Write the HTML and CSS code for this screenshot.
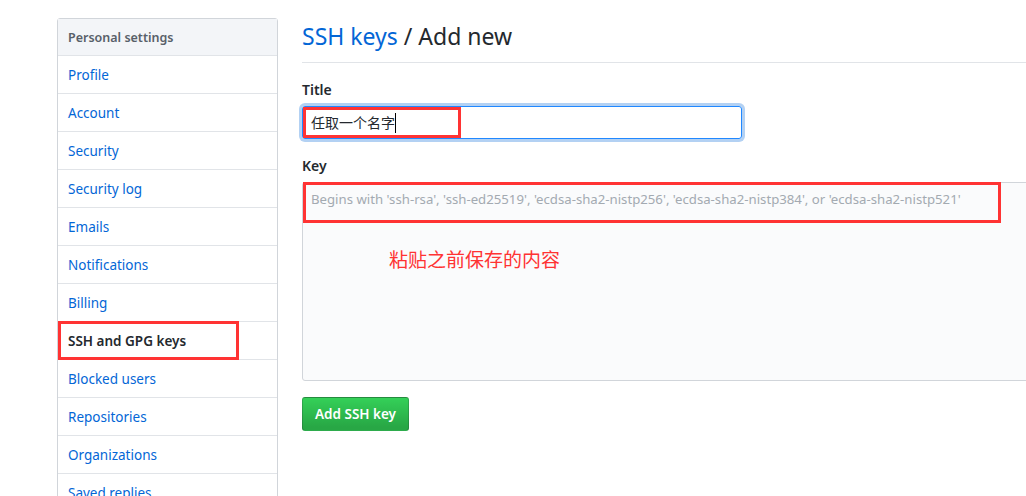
FILE: index.html
```html
<!DOCTYPE html>
<html lang="zh-CN">
<head>
    <meta charset="UTF-8">
    <meta name="viewport" content="width=device-width, initial-scale=1.0">
    <title>Add new SSH key</title>
    <link rel="stylesheet" href="styles.css">
</head>
<body>
    <div class="page">
        <nav class="menu">
            <div class="menu-heading">Personal settings</div>
            <a class="menu-item" href="#">Profile</a>
            <a class="menu-item" href="#">Account</a>
            <a class="menu-item" href="#">Security</a>
            <a class="menu-item" href="#">Security log</a>
            <a class="menu-item" href="#">Emails</a>
            <a class="menu-item" href="#">Notifications</a>
            <a class="menu-item" href="#">Billing</a>
            <a class="menu-item selected" href="#">SSH and GPG keys<span class="mark mark-menu"></span></a>
            <a class="menu-item" href="#">Blocked users</a>
            <a class="menu-item" href="#">Repositories</a>
            <a class="menu-item" href="#">Organizations</a>
            <a class="menu-item" href="#">Saved replies</a>
            <a class="menu-item" href="#">Applications</a>
        </nav>

        <main class="content">
            <h2 class="subhead"><a href="#">SSH keys</a> / Add new</h2>

            <form>
                <div class="form-group">
                    <label class="label">Title</label>
                    <div class="input focused">
                        <span class="value">任取一个名字</span><span class="caret"></span>
                        <span class="mark mark-title"></span>
                    </div>
                </div>

                <div class="form-group">
                    <label class="label">Key</label>
                    <div class="textarea">
                        <span class="placeholder">Begins with 'ssh-rsa', 'ssh-ed25519', 'ecdsa-sha2-nistp256', 'ecdsa-sha2-nistp384', or 'ecdsa-sha2-nistp521'</span>
                        <span class="mark mark-key"></span>
                        <span class="note">粘贴之前保存的内容</span>
                    </div>
                </div>

                <button type="button" class="btn-primary">Add SSH key</button>
            </form>
        </main>
    </div>
</body>
</html>
```

FILE: styles.css
```css
body {
    font-family: "Noto Sans", "Noto Sans CJK SC", sans-serif;
    font-size: 14px;
    line-height: 1.5;
    color: #24292e;
    margin: 0;
    overflow: hidden;
    height: 496px;
}
a {
    color: #0366d6;
    text-decoration: none;
}
.page {
    display: flex;
    gap: 24px;
    padding: 18px 0 0 57px;
}
.menu {
    flex: 0 0 221px;
    box-sizing: border-box;
    border: 1px solid #d1d5da;
    border-radius: 3px;
    align-self: flex-start;
}
.menu-heading {
    padding: 9px 10px 7px;
    font-size: 12.5px;
    line-height: 20px;
    font-weight: 600;
    color: #586069;
    background-color: #f3f5f8;
    border-bottom: 1px solid #e1e4e8;
}
.menu-item {
    position: relative;
    display: block;
    padding: 9px 10px 7px;
    font-size: 13.5px;
    line-height: 21px;
    border-bottom: 1px solid #e1e4e8;
}
.menu-item.selected {
    font-weight: 600;
    color: #24292e;
    box-shadow: inset 2px 0 0 #e36209;
}
.content {
    flex: 0 0 760px;
}
.subhead {
    margin: 0;
    padding: 1px 0 8px;
    font-size: 23px;
    font-weight: 400;
    line-height: 35px;
    border-bottom: 1px solid #e1e4e8;
}
.form-group {
    margin: 16px 0;
}
.label {
    display: block;
    font-weight: 600;
    margin-bottom: 6px;
}
.input {
    position: relative;
    box-sizing: border-box;
    width: 440px;
    height: 33px;
    padding: 5px 8px;
    line-height: 21px;
    border: 1px solid #d1d5da;
    border-radius: 3px;
    display: flex;
    align-items: center;
}
.input.focused {
    border-color: #2188ff;
    box-shadow: 0 0 0 3px rgba(3, 102, 214, 0.3);
}
.value {
    font-family: "Noto Sans CJK SC", sans-serif;
}
.caret {
    width: 1px;
    height: 20px;
    background-color: #000;
}
.textarea {
    position: relative;
    box-sizing: border-box;
    width: 760px;
    height: 199px;
    padding: 6px 8px;
    background-color: #fafbfc;
    border: 1px solid #d1d5da;
    border-radius: 3px;
    line-height: 20px;
}
.placeholder {
    font-size: 13.2px;
    color: #a3aab1;
}
.mark {
    position: absolute;
    border: 3px solid #f33;
    box-sizing: border-box;
}
.mark-menu {
    left: 0;
    top: -1px;
    width: 181px;
    height: 39px;
}
.mark-title {
    left: 0;
    top: 0;
    width: 158px;
    height: 31px;
}
.mark-key {
    left: 0;
    top: -1px;
    width: 698px;
    height: 41px;
}
.note {
    position: absolute;
    left: 86px;
    top: 63px;
    font-family: "Noto Sans CJK SC", sans-serif;
    font-size: 19px;
    line-height: 26px;
    color: #f33;
}
.btn-primary {
    font-family: inherit;
    font-size: 13.5px;
    font-weight: 600;
    line-height: 20px;
    padding: 6px 12px;
    color: #fff;
    background-image: linear-gradient(-180deg, #34d058 0%, #28a745 90%);
    border: 1px solid rgba(27, 31, 35, 0.2);
    border-radius: 3px;
}
```
